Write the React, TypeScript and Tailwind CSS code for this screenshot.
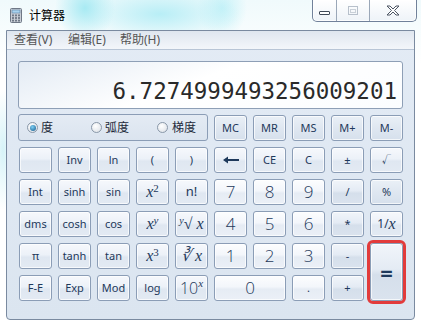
import React from 'react'
import clsx from 'clsx'

const FONT = "font-['Noto_Sans','Noto_Sans_CJK_SC',sans-serif]"

type Kind = 'fn' | 'num' | 'op' | 'mem'

const bgFor: Record<Kind, string> = {
  fn: 'bg-[linear-gradient(#f6f8fc,#ecf1f8_45%,#dfe7f1_55%,#e3eaf3)]',
  num: 'bg-[linear-gradient(#fcfdfe,#f3f6fb_45%,#e6ecf4_55%,#ebf0f7)]',
  op: 'bg-[linear-gradient(#f1f5fa,#e4ebf4_45%,#d5dfeb_55%,#dae3ee)]',
  mem: 'bg-[linear-gradient(#eaf0f7,#dfe7f1_50%,#d6e0ec)]',
}

const Btn = ({
  children,
  kind = 'fn',
  className = '',
}: {
  children?: React.ReactNode
  kind?: Kind
  className?: string
}) => (
  <button
    className={clsx(
      'flex items-center justify-center rounded-[3px] border border-[#8b9db6] text-[#1e395b] shadow-[inset_0_0_0_1px_rgba(255,255,255,0.7)]',
      bgFor[kind],
      className,
    )}
  >
    {children}
  </button>
)

// italic serif maths labels
const M = ({ children }: { children: React.ReactNode }) => (
  <span className="font-['Liberation_Serif',serif] italic text-[16px] leading-none text-[#1e395b]">{children}</span>
)

const Radio = ({ on }: { on?: boolean }) => (
  <span className="flex h-[11px] w-[11px] items-center justify-center rounded-full border border-[#8a98a9] bg-[radial-gradient(circle_at_40%_35%,#ffffff,#d9dee5)]">
    {on && <span className="h-[6px] w-[6px] rounded-full bg-[radial-gradient(circle_at_40%_35%,#7fd0f5,#12578a)]" />}
  </span>
)

const CalcIcon = () => (
  <svg width="12" height="15" viewBox="0 0 12 15">
    <rect x="0.5" y="0.5" width="11" height="14" rx="1" fill="#c9ced6" stroke="#6f7886" />
    <rect x="2" y="2" width="8" height="3" fill="#a9d3ef" stroke="#5c7fa0" strokeWidth="0.6" />
    {[0, 1, 2].map((r) =>
      [0, 1, 2].map((c) => (
        <rect key={`${r}${c}`} x={2 + c * 3} y={6.5 + r * 2.6} width="2" height="1.8" fill="#6f7886" />
      )),
    )}
  </svg>
)

const BackArrow = () => (
  <svg width="18" height="8" viewBox="0 0 18 8">
    <path d="M1 4 L6 0.5 L6 3 L17 3 L17 5 L6 5 L6 7.5 Z" fill="#1e395b" />
  </svg>
)

export default function App() {
  const t = 'text-[11px]'
  const d = "text-[17px] font-light font-['Open_Sans',sans-serif]"
  return (
    <div
      className={clsx(
        'relative flex h-[323px] w-[421px] flex-col overflow-hidden',
        FONT,
        'bg-[radial-gradient(ellipse_30px_32px_at_85px_8px,#a8eaf3,transparent),radial-gradient(ellipse_80px_28px_at_160px_14px,#b8eef6,transparent),radial-gradient(ellipse_25px_30px_at_222px_8px,#c6f2f8,transparent),radial-gradient(ellipse_12px_60px_at_3px_150px,#d6f3f8,transparent),linear-gradient(#f0fafc,#ffffff_20%)]',
      )}
    >
      {/* title bar */}
      <div className="flex h-[30px] shrink-0 items-start">
        <div className="flex items-center gap-[7px] pl-[10px] pt-[8px]">
          <CalcIcon />
          <span className="text-[12px] leading-none text-black">计算器</span>
        </div>
        <div className="ml-auto mr-[4px] flex h-[22px] w-[105px] rounded-b-[5px] border border-t-0 border-[#71819a] bg-[linear-gradient(#ffffff,#eef3f8)] shadow-[inset_0_0_0_1px_rgba(255,255,255,0.8)]">
          <div className="flex w-[24px] items-center justify-center border-r border-[#9aa7b8]">
            <span className="mt-[4px] h-[4px] w-[11px] rounded-[1px] border border-[#404a57] bg-white" />
          </div>
          <div className="flex w-[33px] items-center justify-center border-r border-[#9aa7b8]">
            <span className="flex h-[9px] w-[10px] items-center justify-center border border-[#b7c0cb]">
              <span className="h-[4px] w-[6px] border border-[#c9d0d8]" />
            </span>
          </div>
          <div className="flex flex-1 items-center justify-center">
            <svg width="14" height="11" viewBox="0 0 14 11">
              <path
                d="M1 1 L4 1 L7 4 L10 1 L13 1 L8.5 5.5 L13 10 L10 10 L7 7 L4 10 L1 10 L5.5 5.5 Z"
                fill="#ffffff"
                stroke="#4c5563"
                strokeWidth="1"
                strokeLinejoin="round"
              />
            </svg>
          </div>
        </div>
      </div>

      {/* client */}
      <div className="ml-[6px] flex h-[290px] w-[409px] flex-col rounded-b-[4px] border border-[#7a8aa0] bg-[linear-gradient(#e3ebf5,#dbe5f0)]">
        {/* menu */}
        <div className="flex h-[19px] shrink-0 items-center border-b border-[#b8c5d6] bg-[linear-gradient(#dfe6ef,#f3f6fa)] pl-[7px] text-[12px] leading-none text-[#555]">
          <span className="w-[54px]">查看(V)</span>
          <span className="w-[52px]">编辑(E)</span>
          <span>帮助(H)</span>
        </div>

        <div className="flex flex-1 flex-col pl-[11px] pt-[11px]">
          {/* display */}
          <div className="flex h-[48px] w-[385px] items-end justify-end rounded-[3px] border border-[#8e9fb6] bg-[linear-gradient(160deg,#e3ebf4,#ffffff_45%,#fbfdff)] pb-[6px] pr-[5px]">
            <span className="font-['DejaVu_Sans_Mono',monospace] text-[22.5px] leading-none text-[#2a2a2a]">
              6.7274999493256009201
            </span>
          </div>

          <div className="ml-[1px] mt-[6px] grid grid-cols-[repeat(10,33px)] grid-rows-[26px_26px_26px_26px_26px_26px] gap-[6px]">
            {/* angle units */}
            <div className="col-span-5 -ml-[1px] -mt-[1px] flex h-[27px] items-center rounded-[3px] border border-[#8b9db6] bg-[linear-gradient(#e4ebf4,#dbe4ef)] pl-[8px] text-[12px] leading-none text-[#1e2a3a]">
              <div className="flex w-[64px] items-center gap-[3px]">
                <Radio on />
                <span>度</span>
              </div>
              <div className="flex w-[66px] items-center gap-[3px]">
                <Radio />
                <span>弧度</span>
              </div>
              <div className="flex items-center gap-[4px]">
                <Radio />
                <span>梯度</span>
              </div>
            </div>
            <Btn kind="mem" className={t}>MC</Btn>
            <Btn kind="mem" className={t}>MR</Btn>
            <Btn kind="mem" className={t}>MS</Btn>
            <Btn kind="mem" className={t}>M+</Btn>
            <Btn kind="mem" className={t}>M-</Btn>

            {/* row 1 */}
            <Btn />
            <Btn className={t}>Inv</Btn>
            <Btn className={t}>ln</Btn>
            <Btn className={t}>(</Btn>
            <Btn className={t}>)</Btn>
            <Btn><BackArrow /></Btn>
            <Btn className={t}>CE</Btn>
            <Btn className={t}>C</Btn>
            <Btn className={t}>±</Btn>
            <Btn className="text-[9px]">√</Btn>

            {/* row 2 */}
            <Btn className={t}>Int</Btn>
            <Btn className={t}>sinh</Btn>
            <Btn className={t}>sin</Btn>
            <Btn><M>x<sup className="text-[11px] not-italic">2</sup></M></Btn>
            <Btn className="text-[13px]">n!</Btn>
            <Btn kind="num" className={d}>7</Btn>
            <Btn kind="num" className={d}>8</Btn>
            <Btn kind="num" className={d}>9</Btn>
            <Btn kind="op" className={t}>/</Btn>
            <Btn kind="mem" className={t}>%</Btn>

            {/* row 3 */}
            <Btn className={t}>dms</Btn>
            <Btn className={t}>cosh</Btn>
            <Btn className={t}>cos</Btn>
            <Btn><M>x<sup className="text-[11px]">y</sup></M></Btn>
            <Btn><M><sup className="text-[10px]">y</sup>√ x</M></Btn>
            <Btn kind="num" className={d}>4</Btn>
            <Btn kind="num" className={d}>5</Btn>
            <Btn kind="num" className={d}>6</Btn>
            <Btn kind="op" className={t}>*</Btn>
            <Btn className="text-[12px]">1/<M>x</M></Btn>

            {/* row 4 */}
            <Btn className={t}>π</Btn>
            <Btn className={t}>tanh</Btn>
            <Btn className={t}>tan</Btn>
            <Btn><M>x<sup className="text-[11px] not-italic">3</sup></M></Btn>
            <Btn><M>∛ x</M></Btn>
            <Btn kind="num" className={d}>1</Btn>
            <Btn kind="num" className={d}>2</Btn>
            <Btn kind="num" className={d}>3</Btn>
            <Btn kind="op" className={t}>-</Btn>
            <Btn kind="op" className="row-span-2 text-[22px] font-bold outline-3 outline-[#e23b3b]">=</Btn>

            {/* row 5 */}
            <Btn className={t}>F-E</Btn>
            <Btn className={t}>Exp</Btn>
            <Btn className={t}>Mod</Btn>
            <Btn className={t}>log</Btn>
            <Btn>
              <span className="font-['Open_Sans',sans-serif] text-[16px] font-light leading-none">10</span>
              <sup className="font-['Liberation_Serif',serif] text-[11px] italic">x</sup>
            </Btn>
            <Btn kind="num" className={clsx('col-span-2', d)}>0</Btn>
            <Btn kind="num" className={t}>.</Btn>
            <Btn kind="op" className={t}>+</Btn>
          </div>
        </div>
      </div>
    </div>
  )
}
